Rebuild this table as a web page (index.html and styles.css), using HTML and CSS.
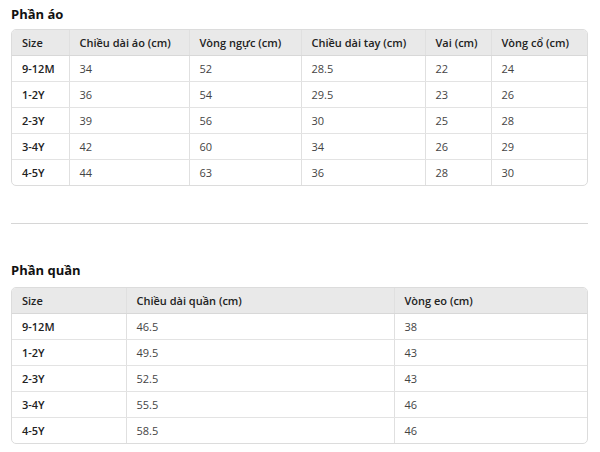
FILE: index.html
```html
<!DOCTYPE html>
<html lang="vi">
<head>
<meta charset="utf-8">
<link rel="stylesheet" href="styles.css">
</head>
<body>
<div class="page">
  <h2 class="title">Phần áo</h2>
  <div class="tbl-wrap">
    <table class="tbl tbl-top">
      <colgroup><col class="c1"><col class="c2"><col class="c3"><col class="c4"><col class="c5"><col></colgroup>
      <thead><tr><th>Size</th><th>Chiều dài áo (cm)</th><th>Vòng ngực (cm)</th><th>Chiều dài tay (cm)</th><th>Vai (cm)</th><th>Vòng cổ (cm)</th></tr></thead>
      <tbody>
        <tr><td class="sz">9-12M</td><td>34</td><td>52</td><td>28.5</td><td>22</td><td>24</td></tr>
        <tr><td class="sz">1-2Y</td><td>36</td><td>54</td><td>29.5</td><td>23</td><td>26</td></tr>
        <tr><td class="sz">2-3Y</td><td>39</td><td>56</td><td>30</td><td>25</td><td>28</td></tr>
        <tr><td class="sz">3-4Y</td><td>42</td><td>60</td><td>34</td><td>26</td><td>29</td></tr>
        <tr><td class="sz">4-5Y</td><td>44</td><td>63</td><td>36</td><td>28</td><td>30</td></tr>
      </tbody>
    </table>
  </div>
  <hr class="divider">
  <h2 class="title title-2">Phần quần</h2>
  <div class="tbl-wrap">
    <table class="tbl tbl-bottom">
      <colgroup><col class="d1"><col class="d2"><col></colgroup>
      <thead><tr><th>Size</th><th>Chiều dài quần (cm)</th><th>Vòng eo (cm)</th></tr></thead>
      <tbody>
        <tr><td class="sz">9-12M</td><td>46.5</td><td>38</td></tr>
        <tr><td class="sz">1-2Y</td><td>49.5</td><td>43</td></tr>
        <tr><td class="sz">2-3Y</td><td>52.5</td><td>43</td></tr>
        <tr><td class="sz">3-4Y</td><td>55.5</td><td>46</td></tr>
        <tr><td class="sz">4-5Y</td><td>58.5</td><td>46</td></tr>
      </tbody>
    </table>
  </div>
</div>
</body>
</html>
```
FILE: styles.css
```css
html, body { margin: 0; padding: 0; background: #fff; }
body { font-family: "Open Sans", "Noto Sans", "Liberation Sans", sans-serif; color: #333; }
.page { padding: 5px 12px 0 11px; }
.title { margin: 0 0 6px; font-size: 13px; line-height: 18px; font-weight: 700; color: #111; }
.title-2 { margin-bottom: 8px; }
.tbl-wrap { border: 1px solid #dcdcdc; border-radius: 5px; overflow: hidden; }
.tbl { width: 100%; border-collapse: collapse; table-layout: fixed; font-size: 11px; }
.tbl th, .tbl td { height: 25px; padding: 0 10px; text-align: left; border-right: 1px solid #e0e0e0; border-bottom: 1px solid #e3e3e3; white-space: nowrap; }
.tbl th:last-child, .tbl td:last-child { border-right: none; }
.tbl tbody tr:last-child td { border-bottom: none; }
.tbl th { background: #e9e9e9; font-weight: 600; color: #222; border-bottom-color: #d8d8d8; }
.tbl td { color: #444; }
.tbl td.sz { font-weight: 600; color: #222; }
.c1 { width: 57px; }
.c2 { width: 120px; }
.c3 { width: 112px; }
.c4 { width: 124px; }
.c5 { width: 66px; }
.d1 { width: 114px; }
.d2 { width: 268px; }
.divider { border: none; border-top: 1px solid #d6d6d6; margin: 37px 0 37px; height: 0; }
```
